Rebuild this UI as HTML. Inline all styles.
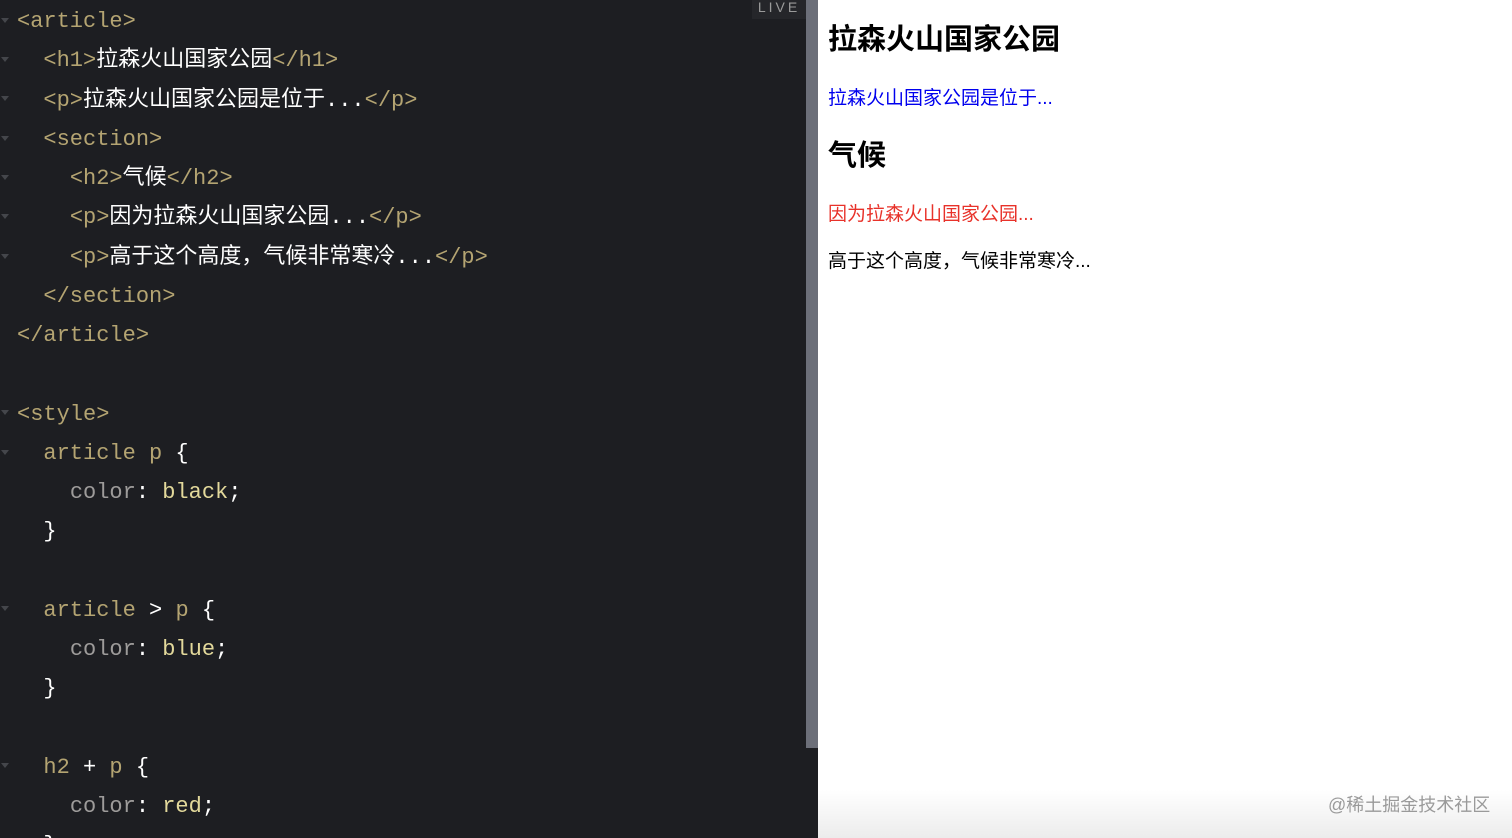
<!DOCTYPE html>
<html><head><meta charset="utf-8"><style>
html,body{margin:0;padding:0;width:1512px;height:838px;overflow:hidden;background:#fff}
#ed{position:absolute;left:0;top:0;width:806px;height:838px;background:#1d1e22;overflow:hidden}
#code{position:absolute;left:17px;top:2px;font-family:"Liberation Mono","Noto Sans CJK SC",monospace;font-size:22px;line-height:39.25px;color:#fff;white-space:pre}
.t{color:#b4a472}.v{color:#e3d99b}.k{color:#9d9b9a}
.fold{position:absolute;left:1px;width:0;height:0;border-left:4px solid transparent;border-right:4px solid transparent;border-top:5px solid #44464b}
#sb{position:absolute;left:806px;top:0;width:12px;height:748px;background:#6c6f79}
#sbt{position:absolute;left:806px;top:748px;width:12px;height:90px;background:#1d1e22}
#live{position:absolute;left:752px;top:0;width:54px;height:19px;background:#25262a;color:#9a9a9a;font:14px "Liberation Sans",sans-serif;letter-spacing:3px;text-align:center;line-height:14px}
#pv{position:absolute;left:818px;top:0;width:694px;height:838px;background:linear-gradient(#fff 0,#fff 790px,#ececec 838px);font-family:"Liberation Sans","Noto Sans CJK SC",sans-serif}
#pv div{position:absolute;left:10px;white-space:nowrap}
</style></head><body>
<div id="ed">
<div id="code"><span class="t">&lt;article&gt;</span>
  <span class="t">&lt;h1&gt;</span>拉森火山国家公园<span class="t">&lt;/h1&gt;</span>
  <span class="t">&lt;p&gt;</span>拉森火山国家公园是位于...<span class="t">&lt;/p&gt;</span>
  <span class="t">&lt;section&gt;</span>
    <span class="t">&lt;h2&gt;</span>气候<span class="t">&lt;/h2&gt;</span>
    <span class="t">&lt;p&gt;</span>因为拉森火山国家公园...<span class="t">&lt;/p&gt;</span>
    <span class="t">&lt;p&gt;</span>高于这个高度，气候非常寒冷...<span class="t">&lt;/p&gt;</span>
  <span class="t">&lt;/section&gt;</span>
<span class="t">&lt;/article&gt;</span>

<span class="t">&lt;style&gt;</span>
  <span class="t">article p</span> {
    <span class="k">color</span>: <span class="v">black</span>;
  }

  <span class="t">article</span> &gt; <span class="t">p</span> {
    <span class="k">color</span>: <span class="v">blue</span>;
  }

  <span class="t">h2</span> + <span class="t">p</span> {
    <span class="k">color</span>: <span class="v">red</span>;
  }</div>
<div class="fold" style="top:18px"></div>
<div class="fold" style="top:57px"></div>
<div class="fold" style="top:96px"></div>
<div class="fold" style="top:136px"></div>
<div class="fold" style="top:175px"></div>
<div class="fold" style="top:214px"></div>
<div class="fold" style="top:254px"></div>
<div class="fold" style="top:410px"></div>
<div class="fold" style="top:450px"></div>
<div class="fold" style="top:606px"></div>
<div class="fold" style="top:763px"></div>
<div id="live">LIVE</div>
</div>
<div id="sb"></div><div id="sbt"></div>
<div id="pv">
<div style="top:16px;font-size:29px;font-weight:bold;color:#000">拉森火山国家公园</div>
<div style="top:83px;font-size:19px;color:#0000ee">拉森火山国家公园是位于...</div>
<div style="top:132px;font-size:29px;font-weight:bold;color:#000">气候</div>
<div style="top:199px;font-size:19px;color:#e8322a">因为拉森火山国家公园...</div>
<div style="top:246px;font-size:19px;color:#000">高于这个高度，气候非常寒冷...</div>
<div style="left:510px;top:791px;font-size:18px;color:#9a9a9a">@稀土掘金技术社区</div>
</div>
</body></html>
